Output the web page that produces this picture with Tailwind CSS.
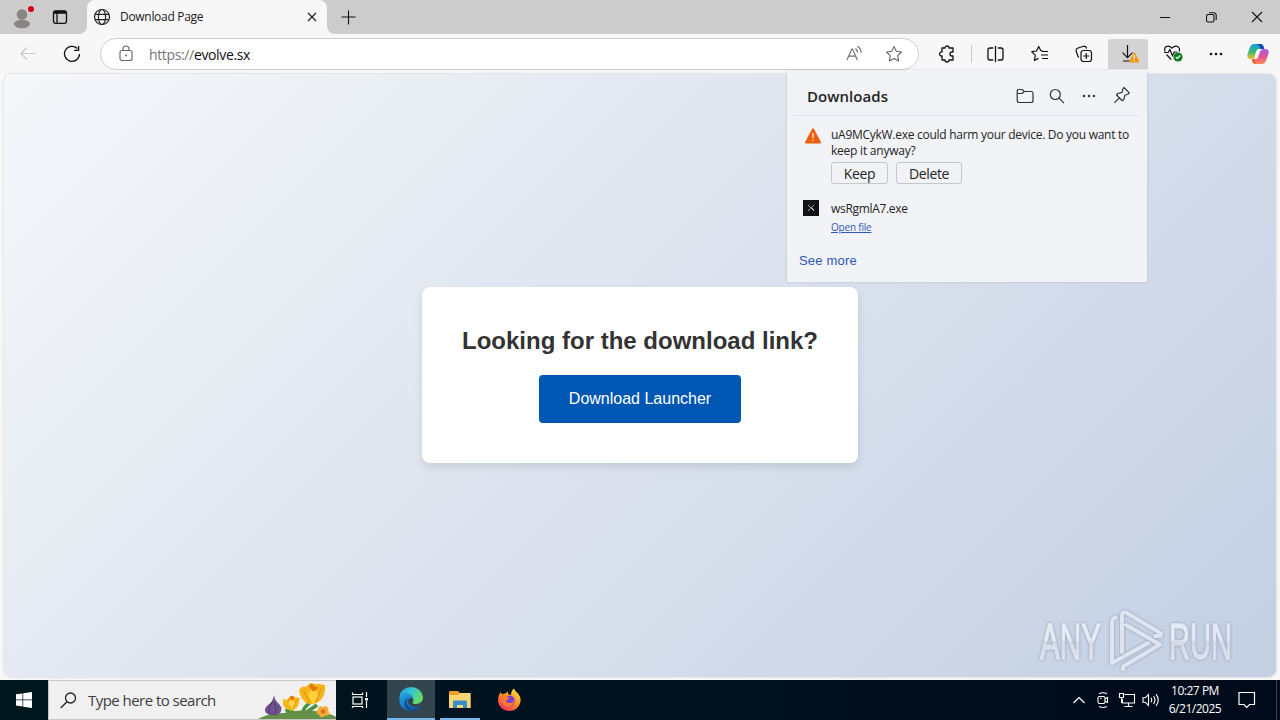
<!DOCTYPE html>
<html lang="en">
<head>
<meta charset="utf-8">
<title>Download Page</title>
<script src="https://cdn.jsdelivr.net/npm/@tailwindcss/browser@4"></script>
</head>
<body class="w-[1280px] h-[720px] overflow-hidden bg-[#f7f7f7] font-['Open_Sans','Noto_Sans',sans-serif] text-[#1b1b1b]">
<div class="flex flex-col w-[1280px] h-[720px]">

<!-- Tab strip -->
<header class="flex h-[34px] bg-[#cccccc] shrink-0">
  <div class="flex w-[87px] bg-[#f7f7f7]"><div class="flex items-center w-full bg-[#cccccc] rounded-br-[8px]">
    <svg class="ml-[12px]" width="24" height="28" viewBox="0 0 24 28" fill="none"><circle cx="10" cy="11.500" r="5.300" fill="#898683"/><ellipse cx="10" cy="21" rx="8" ry="4.200" fill="#898683"/><circle cx="19" cy="6" r="4.200" fill="#d9d4d4"/><circle cx="19" cy="6" r="3.100" fill="#d2081f"/></svg>
    <svg class="ml-[16px]" width="16" height="16" viewBox="0 0 16 16" fill="none" stroke="#111" stroke-width="1.300"><rect x="1.500" y="1.800" width="13" height="12.500" rx="2.200"/><path d="M1.500 4.200h13M5 4v10" /><path d="M2 2.900h12" stroke-width="2.200"/></svg>
  </div></div>
  <div class="flex items-center w-[240px] bg-[#f7f7f7] rounded-t-[8px]">
    <svg class="ml-[6px]" width="18" height="18" viewBox="0 0 18 18" fill="none" stroke="#222" stroke-width="1.200"><circle cx="9" cy="9" r="7.500"/><ellipse cx="9" cy="9" rx="3.600" ry="7.500"/><path d="M2.200 6.300h13.600M2.200 11.700h13.600"/></svg>
    <span class="ml-[9px] text-[12px] tracking-[-0.3px] w-[187px] whitespace-nowrap">Download Page</span>
    <svg width="10" height="10" viewBox="0 0 10 10" stroke="#222" stroke-width="1.200"><path d="M1 1l8 8M9 1l-8 8"/></svg>
  </div>
  <div class="flex bg-[#f7f7f7] grow"><div class="flex items-center w-full bg-[#cccccc] rounded-bl-[8px]">
    <svg class="ml-[14px]" width="15" height="15" viewBox="0 0 15 15" stroke="#111" stroke-width="1.100"><path d="M7.500 .5v14M.5 7h14"/></svg>
    <div class="flex items-center ml-auto">
      <div class="flex justify-center w-[46px]"><svg width="10" height="10" stroke="#111" stroke-width="1"><path d="M0 5.500h10"/></svg></div>
      <div class="flex justify-center w-[46px]"><svg width="11" height="11" viewBox="0 0 11 11" fill="none" stroke="#111" stroke-width="1.100"><rect x=".5" y="2.500" width="7.500" height="7.500" rx="1.500"/><path d="M3 .7h4.500a2.700 2.700 0 0 1 2.700 2.700V8"/></svg></div>
      <div class="flex justify-center w-[46px]"><svg width="12" height="12" viewBox="0 0 12 12" stroke="#111" stroke-width="1.100"><path d="M1 1l10 10M11 1L1 11"/></svg></div>
    </div>
  </div></div>
</header>

<!-- Toolbar -->
<nav class="flex items-center h-[39px] shrink-0 bg-[#f7f7f7] text-[#1b1b1b]">
  <svg class="ml-[20px]" width="16" height="16" viewBox="0 0 16 16" fill="none" stroke="#c9c9c9" stroke-width="1.200"><path d="M15.500 7.500H1M7 1.500L1 7.500l6 6"/></svg>
  <svg class="ml-[27px]" width="18" height="18" viewBox="0 0 18 18" fill="none" stroke="#111" stroke-width="1.300"><path d="M14.300 3.500A7.500 7.500 0 1 0 16.500 9M15.600 1v4.300h-4.500"/></svg>
  <div class="flex items-center ml-[19px] w-[819px] h-[32px] rounded-full bg-white border border-[#cfcfcf]">
    <svg class="ml-[18px]" width="14" height="17" viewBox="0 0 14 17" fill="none" stroke="#666" stroke-width="1.150"><rect x="1" y="5.500" width="12" height="10" rx="2"/><path d="M4 5.500V4a3 3 0 0 1 6 0v1.500"/><circle cx="7" cy="10.500" r="1" fill="#666" stroke="none"/></svg>
    <span class="ml-[16px] mt-px text-[14px] tracking-[-0.36px] w-[300px] whitespace-nowrap"><span class="text-[#767676]">https://</span><span class="text-[#111]">evolve.sx</span></span>
    <svg class="ml-auto" width="17" height="17" viewBox="0 0 17 17" fill="none" stroke="#737373" stroke-width="1.200"><path d="M1 15L5.800 4h.8l4.700 11M2.700 11.200h6.800M9.400 3.600q2 1.300 2.200 4M11.500 1.200q3.500 2.300 3.700 6.700"/></svg>
    <svg class="ml-[22px] mr-[15px]" width="18" height="18" viewBox="0 0 18 18" fill="none" stroke="#666" stroke-width="1.100" stroke-linejoin="round"><path d="M9 1.500l2.300 4.800 5.200.7-3.800 3.600.9 5.300L9 13.400 4.400 15.900l.9-5.300L1.500 7l5.200-.7z"/></svg>
  </div>
  <svg class="ml-[19px]" width="18" height="18" viewBox="0 0 18 18" fill="none" stroke="#111" stroke-width="1.300" stroke-linejoin="round"><path d="M4 3h3a2 2 0 0 1 4 0h4v4h-1a2 2 0 0 0 0 4h1v4h-4a2 2 0 0 1-4 0H4v-4H3.200a2.100 2.100 0 0 1 0-4.100H4z"/></svg>
  <div class="ml-[15px] w-px h-[17px] bg-[#c8c8c8]"></div>
  <div class="flex justify-center ml-[1px] w-[44px]"><svg width="17" height="16" viewBox="0 0 17 16" fill="none" stroke="#111" stroke-width="1.300"><path d="M8.500 0v16M6.200 2H3Q1 2 1 4v8q0 2 2 2h3.200M10.800 2H14q2 0 2 2v8q0 2-2 2h-3.200"/></svg></div>
  <div class="flex justify-center ml-px w-[44px]"><svg width="18" height="18" viewBox="0 0 18 18" fill="none" stroke="#111" stroke-width="1.200" stroke-linejoin="round"><path d="M11.500 5.800L9.700 5.500 7.700 1.500 5.500 6l-4.700.7 3.500 3.400-.9 5.400 4-2.100M10.500 6.500h6.500M10 10h7M11 13.500h6"/></svg></div>
  <div class="flex justify-center w-[44px]"><svg width="18" height="18" viewBox="0 0 18 18" fill="none" stroke="#111" stroke-width="1.200"><rect x="6" y="5.500" width="10.500" height="11" rx="2.500"/><path d="M11.200 8v6M8.200 11h6M4 12.500Q3 12 2.500 10L1.200 6Q.7 4 2.500 3.200L8.500 1.300Q11 .7 11.700 3.500"/></svg></div>
  <div class="flex justify-center items-center ml-[2px] w-[40px] h-[30px] bg-[#d3d3d3] rounded-t-[3px]"><svg width="22" height="20" viewBox="0 0 22 20" fill="none" stroke="#111" stroke-width="1.200"><path d="M10.500 1v12.500M5.500 8.700l5 5 5-5M6 17h7"/><path d="M17.500 8.700L22 18h-9.700z" fill="#f29a15" stroke="#f29a15" stroke-width="1" stroke-linejoin="round"/><path d="M17.300 11v4M17.300 16v1" stroke="#fff" stroke-width="1"/></svg></div>
  <div class="flex justify-center ml-[3px] w-[44px]"><svg width="20" height="19" viewBox="0 0 20 19" fill="none" stroke="#111" stroke-width="1.200"><path d="M2.200 7.500Q.8 4.500 3 2.800 6 .8 9 4.200q3.300-3.500 6.200-1.300 2.200 2 .9 4.600M1.200 8.500h4l1.700-3 2.500 6 1.800-3.500h3M3.500 10.500l4.700 5"/><circle cx="15" cy="13" r="4.600" fill="#0f7b20" stroke="none"/><path d="M12.800 13l1.500 1.500 3-3" stroke="#fff" stroke-width="1.100"/></svg></div>
  <div class="flex justify-center w-[42px]"><svg width="16" height="4" fill="#111"><circle cx="3" cy="2" r="1.300"/><circle cx="8" cy="2" r="1.300"/><circle cx="13" cy="2" r="1.300"/></svg></div>
  <div class="flex justify-center w-[42px]"><svg width="22" height="20" viewBox="0 0 22 20"><defs><linearGradient id="ca" x1="0" y1="0" x2="0" y2="1"><stop offset="0" stop-color="#159bea"/><stop offset=".5" stop-color="#35b875"/><stop offset="1" stop-color="#f4c126"/></linearGradient><linearGradient id="cb" x1="0" y1="0" x2="0" y2="1"><stop offset="0" stop-color="#9b61ed"/><stop offset=".5" stop-color="#e65191"/><stop offset="1" stop-color="#ff8852"/></linearGradient></defs><path d="M7 0h7q2 0 2.700 3l.5 2h-3.800q-2 0-2.700 2.200L9 12.500Q8 15 5.500 15H3.500Q0 15 .3 11L2.900 3.500Q4.300 0 7 0z" fill="url(#ca)"/><path d="M9 0h5q2 0 2.700 3l.5 2h-3.700L12 2Q11 0 9 0z" fill="#164bb7"/><path d="M15 20H8q-2 0-2.700-3L4.800 15h3.800q2 0 2.700-2.200L13 7.500Q14 5 16.500 5h2Q22 5 21.700 9L19.100 16.500Q17.700 20 15 20z" fill="url(#cb)"/><path d="M9 20H8q-2 0-2.700-3L4.800 15H7z" fill="#f45b38"/><path d="M9.600 12.800L12 7q.7-2 2-2h-3Q9.900 5.500 9 8l-2 7h1q1 0 1.600-2.200z" fill="#fff"/></svg></div>
</nav>

<!-- Page viewport -->
<main class="relative flex items-start justify-center ml-[4px] mt-px w-[1272px] h-[603px] shrink-0 rounded-[8px] bg-linear-135 from-[#f5f7fa] to-[#c3cfe2] shadow-[0_0_2px_rgba(0,0,0,0.25)]">
  <section class="flex flex-col items-center mt-[213px] w-[436px] h-[176px] rounded-[8px] bg-white shadow-[0_4px_8px_rgba(0,0,0,0.1)] font-['Liberation_Sans',sans-serif]">
    <h1 class="mt-[38px] text-[24px] leading-[32px] font-bold text-[#333] whitespace-nowrap">Looking for the download link?</h1>
    <button class="mt-[18px] w-[202px] h-[48px] rounded-[4px] bg-[#0056b3] text-white text-[16px]">Download Launcher</button>
  </section>

  <!-- Downloads flyout -->
  <aside class="absolute left-[783px] top-[-4px] w-[360px] h-[212px] bg-[#f1f3f7] shadow-[0_0_2px_rgba(0,0,0,0.18)] text-[#242424]">
    <div class="flex items-center mx-[6px] h-[46px] border-b border-[#e0e4ea] text-[#333]">
      <h2 class="ml-[14px] mt-[7px] w-[209px] text-[15px] font-semibold tracking-[0.05px] text-[#242424]">Downloads</h2>
      <svg class="mt-[6px]" width="18" height="16" viewBox="0 0 18 16" fill="none" stroke="currentColor" stroke-width="1.200"><path d="M1.200 3.500Q1.200 1.500 3 1.500h3.200L8.200 3.500H15q2 0 2 2V12.500q0 2-2 2H3.200q-2 0-2-2zM1.200 5.500h5L8.200 3.500"/></svg>
      <svg class="ml-[15px] mt-[6px]" width="16" height="16" viewBox="0 0 16 16" fill="none" stroke="currentColor" stroke-width="1.200"><circle cx="6.300" cy="6.500" r="5"/><path d="M10 10.200l5 5"/></svg>
      <svg class="ml-[16px] mt-[6px]" width="16" height="4" fill="currentColor"><circle cx="3" cy="2" r="1.200"/><circle cx="8" cy="2" r="1.200"/><circle cx="13" cy="2" r="1.200"/></svg>
      <svg class="ml-[16px] mt-[5px]" width="18" height="18" viewBox="0 0 18 18" fill="none" stroke="currentColor" stroke-width="1.200" stroke-linejoin="round"><path d="M11 1.500L16.300 6.800l-1.500 1.500-3 1-1 4.300-1.500 1.100L3.500 9l1.300-1.500L9 6.300l.9-3.300zM6.300 11.800l-5 5"/></svg>
    </div>
    <div class="flex mt-[11px] text-[12px] leading-[16px]">
      <svg class="ml-[18px] mt-px shrink-0" width="16" height="16" viewBox="0 0 16 16"><path d="M8 1.300L15 14.500H1z" fill="#ee5e10" stroke="#ee5e10" stroke-width="2" stroke-linejoin="round"/><path d="M8 5v5M8 11.500v1.500" stroke="#fbd9c4" stroke-width="1.400"/></svg>
      <div class="ml-[10px]">
        <p class="whitespace-nowrap tracking-[-0.275px]">uA9MCykW.exe could harm your device. Do you want to<br><span class="tracking-[-0.23px]">keep it anyway?</span></p>
        <div class="flex gap-[8px] mt-[3px] text-[14px] tracking-[-0.38px]">
          <button class="w-[57px] h-[22px] rounded-[3px] border border-[#c4c7cc] leading-[21px]">Keep</button>
          <button class="w-[66px] h-[22px] rounded-[3px] border border-[#c4c7cc] leading-[21px]">Delete</button>
        </div>
      </div>
    </div>
    <div class="flex mt-[16px] text-[12px]">
      <svg class="ml-[16px] shrink-0" width="16" height="16" viewBox="0 0 16 16"><rect width="16" height="16" fill="#111216"/><path d="M5 5l6 6M11 5L7.500 8.500M8 7l3 3M7 9l-2 2" stroke="#aaa" stroke-width="1"/></svg>
      <div class="flex flex-col items-start ml-[12px]">
        <span class="leading-[17px] tracking-[-0.32px]">wsRgmlA7.exe</span>
        <a class="mt-[3px] text-[10px] leading-[14px] text-[#3057b5] underline tracking-[-0.2px]">Open file</a>
      </div>
    </div>
    <a class="block ml-[12px] mt-[19px] text-[13px] leading-[16px] tracking-[0.2px] text-[#2f57b5] font-['Liberation_Sans',sans-serif]">See more</a>
  </aside>

  <!-- Watermark -->
  <svg class="absolute left-[1030px] top-[530px] opacity-75" width="222" height="72" viewBox="0 0 222 72" style="filter:drop-shadow(0 0 1.500px #7a869c)">
    <defs><linearGradient id="wm" x1="0" y1="18" x2="0" y2="56" gradientUnits="userSpaceOnUse"><stop offset="0" stop-color="#eff4fc"/><stop offset=".48" stop-color="#eef2fa"/><stop offset=".52" stop-color="#d8dee8"/><stop offset="1" stop-color="#e7ebf2"/></linearGradient></defs>
    <g fill="url(#wm)" stroke="url(#wm)" stroke-width="1.500" font-family="Liberation Sans, sans-serif" font-size="50"><text x="6" y="54.500" textLength="61" lengthAdjust="spacingAndGlyphs">ANY</text><text x="135" y="54.500" textLength="63" lengthAdjust="spacingAndGlyphs">RUN</text></g>
    <g fill="none" stroke="#e6ebf4" stroke-width="4" stroke-linejoin="round" stroke-linecap="round"><path d="M82 13.500Q78 14 78 18V59L114 39"/><path d="M88 48V11Q88 8 92 8.500L127 29.500V31.500L121 32"/><path d="M92 21L126 40.500 90 62Q88 64 89.500 65"/></g>
  </svg>
</main>

<!-- Taskbar -->
<footer class="flex h-[40px] mt-auto shrink-0 bg-linear-to-r from-[#00171f] to-[#000a1a] text-white">
  <div class="flex items-center justify-center w-[48px]"><svg width="16" height="16" viewBox="0 0 16 16" fill="#fff"><path d="M0 2.300l6.500-.9v6.200H0zM7.200 1.300L16 0v7.600H7.200zM0 8.300h6.500v6.200L0 13.600zM7.200 8.300H16V16l-8.800-1.300z"/></svg></div>
  <div class="flex items-center w-[288px] bg-[#f0f0f0] border-y border-[#c6c6c6] border-l text-[#3d3d3d]">
    <svg class="ml-[11px]" width="17" height="17" viewBox="0 0 17 17" fill="none" stroke="#222" stroke-width="1.300"><circle cx="10.500" cy="6" r="5"/><path d="M7 9.700L.7 16"/></svg>
    <span class="ml-[11px] text-[15px] tracking-[-0.54px] whitespace-nowrap">Type here to search</span>
    <svg class="ml-auto shrink-0" width="80" height="38" viewBox="0 0 80 38">
      <path d="M36 35Q35 28 39 24M36 36l-6-8 6 5M47 33Q46 27 56 20M48 33l13-9" fill="none" stroke="#439541" stroke-width="3.500"/>
      <path d="M2 38Q12 32 28 32 48 27 65 31 76 33 80 36V38z" fill="#668f48"/>
      <path d="M18 14q1 6 5 9 5 5 0 10-7 3-13-1-3-4 2-8 5-3 6-10z" fill="#71518f"/><path d="M17 20Q11 27 14 34M18 21q4 8 0 13" stroke="#493b65" fill="none"/>
      <path d="M27 18l4 1 3-4 5 1 5 1-2 8-5 5-7-2-3-4z" fill="#f7b717"/><path d="M32 18l3 9M41 18l-4 9" stroke="#e89818" stroke-width="1.300"/><path d="M36 17l3 5-3 6-4-6z" fill="#ffd44b"/><circle cx="36" cy="17" r="2.200" fill="#df7910"/>
      <path d="M43 9Q46 4 50 6L54 2 59 3 64 3 69 4Q70 14 64 20 57 25 50 22 44 17 43 9z" fill="#f7b51b"/><path d="M47 9l7 13M66 6l-6 15" stroke="#e99b16" stroke-width="1.500"/><path d="M57 6l5 8-5 9-5-9z" fill="#ffd23b"/><path d="M53 5l4 5 5-3-4-1-2-3z" fill="#e17810" stroke="#e17810"/>
      <g fill="#f6ad36"><circle cx="65" cy="28" r="2.800"/><circle cx="69.500" cy="28" r="2.800"/><circle cx="70.500" cy="32" r="2.800"/><circle cx="66" cy="33.500" r="2.800"/><circle cx="63" cy="31" r="2.500"/></g><circle cx="67" cy="30.500" r="2.300" fill="#d57320"/>
    </svg>
  </div>
  <div class="flex items-center justify-center w-[48px]"><svg width="18" height="18" viewBox="0 0 18 18" fill="none" stroke="#fff" stroke-width="1.200"><rect x="2" y="6" width="9" height="7"/><path d="M1.500 1.500V3.500h10v-2M1.500 17v-1.500h10V17M15.500 1v5M15.500 10v7"/><path d="M14 7h3v2.500h-3z" fill="#fff" stroke="none"/></svg></div>
  <div class="flex items-center justify-center ml-[3px] w-[48px] bg-[#33464f] border-b-2 border-[#76b9ed]"><svg width="24" height="24" viewBox="0 0 24 24"><defs><linearGradient id="ea" x1="0" y1="0" x2="1" y2=".5"><stop offset="0" stop-color="#239be0"/><stop offset=".5" stop-color="#36c5cf"/><stop offset="1" stop-color="#66db65"/></linearGradient><linearGradient id="eb" x1="0" y1="0" x2=".6" y2="1"><stop offset="0" stop-color="#25a5e2"/><stop offset="1" stop-color="#1260bb"/></linearGradient></defs><path d="M.4 10Q2 .3 12 0 22 .3 24 10q.3 6-6.500 7-3.800 0-4-1.500 2-3-.5-5Q8 6 .4 10z" fill="url(#ea)"/><path d="M.3 13Q0 6 7.500 6q6 .5 6.500 5Q9 10 9 15q1 5 7 5.300 3 0 5.500-1.500Q18 24 12 24 1 23.500.3 13z" fill="url(#eb)"/><path d="M9.500 10.500Q6 15 9 19q4 4.500 10 1.500l2.500-1.700Q18 24 12 24q-6-1-6.500-7 0-5 4-6.500z" fill="#104b8d"/></svg></div>
  <div class="flex items-center justify-center ml-[5px] w-[40px] border-b-2 border-[#76b9ed]"><svg width="22" height="19" viewBox="0 0 22 19"><path d="M0 2Q0 1 1.500 1H9l2 2h9.500q1 0 1 1V18H0z" fill="#e9a126"/><path d="M0 5h9l2-2h10.500V18H0z" fill="#f8d675"/><path d="M4 18V12q0-1.500 1.500-1.500h11q1.500 0 1.500 1.500v6h-4v-3H8v3z" fill="#368fc9"/></svg></div>
  <div class="flex items-center justify-center ml-[5px] w-[48px]"><svg width="24" height="24" viewBox="0 0 24 24"><defs><linearGradient id="fx" x1=".8" y1="0" x2=".2" y2="1"><stop offset="0" stop-color="#ffe43d"/><stop offset=".5" stop-color="#ff8b24"/><stop offset="1" stop-color="#f02465"/></linearGradient></defs><path d="M3.500 4l1.700 2.500Q7 5 8.500 5.500l2.500-2.200V6l3 1q0-4.500 3-6.500 1 3 4 5 3.500 4 2.300 9Q21 23 12 23 2.500 22.500 1 13.500.7 8 3.500 4z" fill="url(#fx)"/><path d="M9 9Q13 6 17 9.500q2 6-2.500 9-6 1-8.500-4 0-2.500 3-2.500l2.500-1z" fill="#733bd2"/><path d="M4.500 9.500q3-3 6.500-.5l2 1.200q-3 1-3.800 2.300 0 2.500 3.800 2.500 2.500 0 4-3 .5 6-5 7-7-.5-7.500-9.500z" fill="#ff7a30"/><circle cx="14" cy="12.200" r="2.500" fill="#8041d0"/></svg></div>
  <div class="flex items-center ml-auto">
    <svg width="14" height="10" viewBox="0 0 14 10" fill="none" stroke="#fff" stroke-width="1.200"><path d="M1.500 8L7 2.500 12.500 8"/></svg>
    <svg class="ml-[10px]" width="14" height="18" viewBox="0 0 14 18" fill="none" stroke="#fff" stroke-width="1.100"><rect x="2" y="5.500" width="7" height="7" rx="1.500"/><path d="M9 8l2.500-1.500v5L9 10.300M3 2.700Q7 .7 11 2.700M3 15.500Q7 17.500 11 15.500"/><path d="M4 7.500h1.500" /></svg>
    <svg class="ml-[8px]" width="18" height="16" viewBox="0 0 18 16" fill="none" stroke="#fff" stroke-width="1.100"><path d="M6.500 2.500H16.500V11H4.500V7M10.500 11v3M6.500 14.500h8"/><path d="M1.500 1.500h4v4h-4zM3.500 5.500V11"/></svg>
    <svg class="ml-[6px]" width="18" height="14" viewBox="0 0 18 14" fill="none" stroke="#fff" stroke-width="1.100"><path d="M1 4.800h2.200L6.500 1.500v11L3.200 9.200H1zM9 4.800q1.500 2.200 0 4.400M11.500 3q3 4 0 8M14 1.200q4.500 5.800 0 11.600"/></svg>
    <div class="flex flex-col items-center ml-[4px] w-[62px] text-[12px] leading-[18px] tracking-[-0.48px] whitespace-nowrap"><span>10:27 PM</span><span>6/21/2025</span></div>
    <svg class="ml-[12px] mr-[20px]" width="18" height="18" viewBox="0 0 18 18" fill="none" stroke="#fff" stroke-width="1.200"><path d="M1 1.500h15.500v12h-5L8.700 16.300 6 13.500H1z"/></svg>
    <div class="w-px h-[40px] bg-[#39434f] mr-[3px]"></div>
  </div>
</footer>
</div>
</body>
</html>
